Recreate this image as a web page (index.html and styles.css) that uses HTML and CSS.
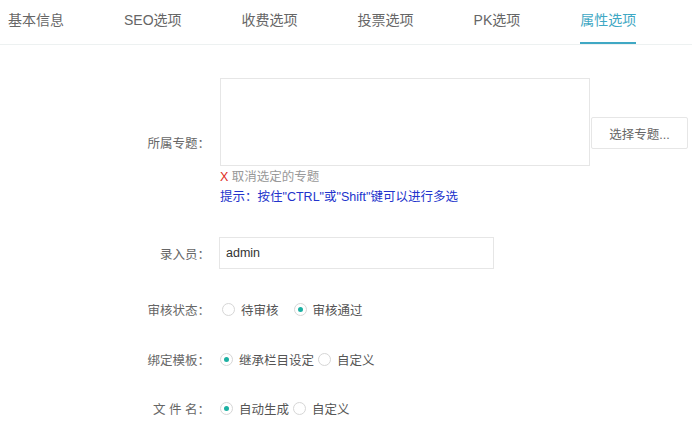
FILE: index.html
```html
<!DOCTYPE html>
<html lang="zh-CN">
<head>
  <meta charset="UTF-8">
  <meta name="viewport" content="width=device-width, initial-scale=1.0">
  <title>属性选项</title>
  <link rel="stylesheet" href="styles.css">
</head>
<body>
<ul class="tabs">
  <li>基本信息</li>
  <li>SEO选项</li>
  <li>收费选项</li>
  <li>投票选项</li>
  <li>PK选项</li>
  <li class="active">属性选项</li>
</ul>

<div class="form">
  <div class="row">
    <label class="row-label">所属专题：</label>
    <div class="row-field">
      <div class="special-line">
        <textarea class="special-box"></textarea>
        <button class="btn-select">选择专题...</button>
      </div>
      <div class="cancel"><span class="cancel-x">X</span> 取消选定的专题</div>
      <div class="hint">提示：按住"CTRL"或"Shift"键可以进行多选</div>
    </div>
  </div>

  <div class="row">
    <label class="row-label" for="writer">录入员：</label>
    <div class="row-field">
      <input type="text" id="writer" class="text-input" value="admin">
    </div>
  </div>

  <div class="row">
    <label class="row-label">审核状态：</label>
    <div class="row-field radios radios-wide">
      <label class="radio"><input type="radio" name="status"><span>待审核</span></label>
      <label class="radio"><input type="radio" name="status" checked><span>审核通过</span></label>
    </div>
  </div>

  <div class="row row-tight">
    <label class="row-label">绑定模板：</label>
    <div class="row-field radios">
      <label class="radio"><input type="radio" name="tpl" checked><span>继承栏目设定</span></label>
      <label class="radio"><input type="radio" name="tpl"><span>自定义</span></label>
    </div>
  </div>

  <div class="row">
    <label class="row-label">文 件 名：</label>
    <div class="row-field radios">
      <label class="radio"><input type="radio" name="fname" checked><span>自动生成</span></label>
      <label class="radio"><input type="radio" name="fname"><span>自定义</span></label>
    </div>
  </div>
</div>
</body>
</html>
```

FILE: styles.css
```css
:root {
  --theme-color: #3fa8c4;
  --radio-color: #1cb0a2;
  --border-color: #e6e6e6;
}

body {
  margin: 0;
  font-family: "Liberation Sans", "Noto Sans CJK SC", sans-serif;
  background-color: #ffffff;
  color: #666666;
}

.tabs {
  display: flex;
  margin: 0;
  padding: 0 0 0 8px;
  list-style: none;
  border-bottom: 1px solid #edf1f1;
}

.tabs li {
  flex-shrink: 0;
  margin-right: 60px;
  padding-bottom: 2px;
  line-height: 40px;
  font-size: 14px;
  white-space: nowrap;
  color: #666666;
  border-bottom: 2px solid transparent;
}

.tabs li:last-child {
  margin-right: 0;
}

.tabs li.active {
  color: var(--theme-color);
  border-bottom-color: var(--theme-color);
}

.form {
  padding-top: 33px;
  font-size: 12.5px;
}

.row {
  display: grid;
  grid-template-columns: 210px 1fr;
  column-gap: 10px;
  align-items: center;
  margin-bottom: 30px;
}

.row-tight {
  margin-bottom: 29px;
}

.row-label {
  text-align: right;
  color: #666666;
  white-space: pre;
}

.special-line {
  display: flex;
  align-items: flex-end;
}

.special-box {
  width: 370px;
  height: 88px;
  margin: 0;
  padding: 0;
  box-sizing: border-box;
  border: 1px solid var(--border-color);
  resize: none;
  outline: none;
}

.btn-select {
  width: 97px;
  height: 32px;
  margin: 0 0 17px 1px;
  padding: 0;
  background: #ffffff;
  border: 1px solid var(--border-color);
  border-radius: 2px;
  font-family: inherit;
  font-size: 12.5px;
  color: #666666;
  cursor: pointer;
}

.cancel {
  line-height: 20px;
  margin-top: 1px;
  color: #999999;
}

.cancel-x {
  color: #e02a23;
}

.hint {
  line-height: 20px;
  color: #2233cc;
}

.text-input {
  display: block;
  width: 275px;
  height: 32px;
  margin-left: -1px;
  padding: 0 6px;
  box-sizing: border-box;
  border: 1px solid var(--border-color);
  font-family: inherit;
  font-size: 12.5px;
  color: #333333;
  outline: none;
}

.radios {
  display: flex;
  align-items: center;
  height: 20px;
  gap: 4px;
}

.radios-wide {
  gap: 15px;
  padding-left: 2px;
}

.radio {
  display: flex;
  align-items: center;
  color: #555555;
  cursor: pointer;
}

.radio input {
  appearance: none;
  -webkit-appearance: none;
  width: 13px;
  height: 13px;
  margin: 0 6px 0 0;
  box-sizing: border-box;
  border: 1px solid #d6d6d6;
  border-radius: 50%;
  background: #ffffff;
  display: grid;
  place-items: center;
}

.radio input:checked::after {
  content: "";
  width: 5px;
  height: 5px;
  border-radius: 50%;
  background: var(--radio-color);
}
```
